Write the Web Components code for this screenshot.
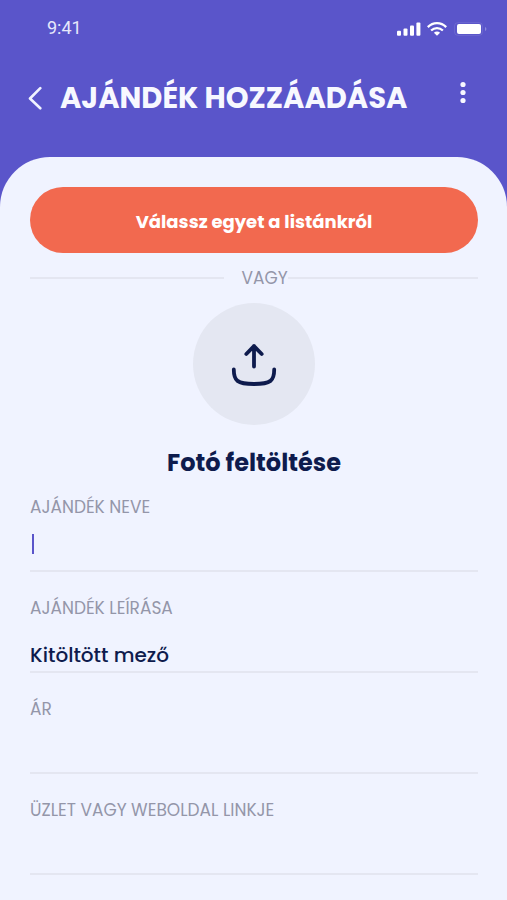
<!DOCTYPE html>
<html lang="hu">
<head>
<meta charset="utf-8">
<meta name="viewport" content="width=device-width, initial-scale=1">
<title>Ajándék hozzáadása</title>
<style>
  :root {
    --brand: #5a55ca;
    --surface: #f0f3ff;
    --accent: #f2694f;
    --ink: #0e1b4d;
    --muted: #9496a9;
    --line: #e4e6f1;
    --disc: #e4e7f2;
  }
  body {
    margin: 0;
    background: var(--surface);
    color: var(--ink);
    font-family: Poppins, "Open Sans", sans-serif;
  }
</style>
</head>
<body>
<gift-screen>
  <status-bar slot="top" time="9:41"></status-bar>
  <title-bar slot="top">AJÁNDÉK HOZZÁADÁSA</title-bar>
  <pill-button>Válassz egyet a listánkról</pill-button>
  <or-divider>VAGY</or-divider>
  <photo-upload>Fotó feltöltése</photo-upload>
  <form-field label="AJÁNDÉK NEVE" active></form-field>
  <form-field label="AJÁNDÉK LEÍRÁSA" value="Kitöltött mező"></form-field>
  <form-field label="ÁR"></form-field>
  <form-field label="ÜZLET VAGY WEBOLDAL LINKJE"></form-field>
</gift-screen>

<script>
const define = (name, html, setup) => {
  const template = document.createElement('template');
  template.innerHTML = html;
  customElements.define(name, class extends HTMLElement {
    connectedCallback() {
      if (this.shadowRoot) return;
      const root = this.attachShadow({ mode: 'open' });
      root.append(template.content.cloneNode(true));
      if (setup) setup(this, root);
    }
  });
};

define('gift-screen', `
  <style>
    :host { display: block; min-height: 100vh; background: var(--brand); }
    .page { display: flex; flex-direction: column; min-height: 100vh; }
    main {
      flex: 1;
      padding: 30px 29px 24px 30px;
      background: var(--surface);
      border-radius: 50px 50px 0 0;
    }
  </style>
  <div class="page">
    <header><slot name="top"></slot></header>
    <main><slot></slot></main>
  </div>`);

define('status-bar', `
  <style>
    :host {
      display: flex; align-items: center; justify-content: space-between;
      height: 56px; padding: 0 20px 0 47px; color: #e6e8fb;
      font: 400 18px/24px Roboto, sans-serif;
    }
    .icons { display: flex; align-items: center; gap: 6px; padding-top: 2px; }
    svg { display: block; }
  </style>
  <span class="time"></span>
  <div class="icons">
    <svg width="24" height="14" viewBox="0 0 24 14" fill="#fff" aria-hidden="true">
      <rect x="0" y="8.7" width="4" height="5" rx="1"/><rect x="6.5" y="6.5" width="4" height="7.2" rx="1"/>
      <rect x="13" y="3.5" width="4" height="10.2" rx="1"/><rect x="19.4" y="0.6" width="4" height="13.1" rx="1"/>
    </svg>
    <svg width="20" height="14" viewBox="0 0 20 14" fill="none" stroke="#fff" stroke-width="2.3" aria-hidden="true">
      <path d="M.8 5.1C6-.1 14-.1 19.2 5.1"/><path d="M4.1 8.5c3.4-3.3 8.4-3.3 11.8 0"/>
      <path d="M6.9 10.8c1.8-1.6 4.4-1.6 6.2 0L10 13.8z" fill="#fff" stroke="none"/>
    </svg>
    <svg width="34" height="14" viewBox="0 0 34 14" aria-hidden="true">
      <rect x="1.5" y=".6" width="28" height="12.8" rx="3.4" fill="none" stroke="#fff" stroke-opacity=".1"/>
      <rect x="4" y="2" width="24" height="10" rx="2" fill="#fff"/>
      <path d="M32 5v4c1.9-.8 1.9-3.2 0-4z" fill="#fff" fill-opacity=".3"/>
    </svg>
  </div>`,
  (host, root) => { root.querySelector('.time').textContent = host.getAttribute('time'); });

define('title-bar', `
  <style>
    :host { display: flex; align-items: center; height: 84px; padding: 0 32px 17px 24px; }
    h1 { flex: 1; margin: 0; color: #f7f8ff; font-size: 29px; line-height: 40px; font-weight: 700; white-space: nowrap; }
    button { display: block; padding: 0; border: 0; background: none; cursor: pointer; }
    svg { display: block; }
    .back { margin-right: 12px; }
    .more { align-self: flex-start; margin-top: 24px; }
  </style>
  <button class="back" type="button" aria-label="Vissza">
    <svg width="24" height="24" viewBox="0 0 24 24" fill="none" stroke="#f0f3ff" stroke-width="2.6" stroke-linecap="round" stroke-linejoin="round"><path d="M16.3 2.2 6 12.5l10.300 9.8"/></svg>
  </button>
  <h1><slot></slot></h1>
  <button class="more" type="button" aria-label="Továbbiak">
    <svg width="24" height="24" viewBox="0 0 24 24" fill="#f7f8ff"><circle cx="12" cy="4.5" r="2.6"/><circle cx="12" cy="12.5" r="2.6"/><circle cx="12" cy="20.5" r="2.6"/></svg>
  </button>`);

define('pill-button', `
  <style>
    :host { display: block; }
    button {
      display: block; width: 100%; height: 66px; padding: 4px 0 0; border: 0; border-radius: 33px;
      background: var(--accent); color: #fff; cursor: pointer;
      font: 700 18px/28px Poppins, "Open Sans", sans-serif;
    }
  </style>
  <button type="button"><slot></slot></button>`);

define('or-divider', `
  <style>
    :host {
      display: flex; align-items: center; height: 50px;
      color: var(--muted); font-size: 17px; line-height: 24px;
    }
    :host::before, :host::after { content: ""; flex: 1; height: 2px; background: var(--line); }
    :host::before { flex-basis: 4px; margin-right: 17px; }
  </style>
  <slot></slot>`);

define('photo-upload', `
  <style>
    :host { display: block; }
    button {
      display: flex; flex-direction: column; align-items: center; gap: 20px;
      margin: 0 auto; padding: 0; border: 0; background: none; color: var(--ink); cursor: pointer;
      font: 700 24px/36px Poppins, "Open Sans", sans-serif;
    }
    .disc { display: grid; place-items: center; width: 122px; height: 122px; border-radius: 50%; background: var(--disc); }
    svg { display: block; }
  </style>
  <button type="button">
    <span class="disc">
      <svg width="48" height="44" viewBox="0 0 48 44" fill="none" stroke="#0e1b4d" stroke-width="3.8" stroke-linecap="round" stroke-linejoin="round" aria-hidden="true">
        <path d="M24 24.5V4M16.3 12 24 4.2l7.7 7.8"/>
        <path d="M3.8 27.5C3.8 38.5 7 42 24 42S44.2 38.5 44.2 27.5"/>
      </svg>
    </span>
    <span><slot></slot></span>
  </button>`);

define('form-field', `
  <style>
    :host { display: block; padding-bottom: 25px; }
    :host([active]) { padding-top: 15px; }
    label { display: block; color: var(--muted); font-size: 17px; line-height: 22px; }
    input {
      display: block; box-sizing: border-box; width: 100%; height: 54px; padding: 0;
      border: 0; border-bottom: 2px solid var(--line); border-radius: 0; outline: 0;
      background: none; color: var(--ink);
      font: 500 20px/30px Poppins, "Open Sans", sans-serif;
    }
    :host([value]) input { padding-top: 20px; }
    :host([active]) input { background: linear-gradient(#5a55ca, #5a55ca) 2px center / 2px 20px no-repeat; }
  </style>
  <label for="control"></label>
  <input id="control" type="text">`,
  (host, root) => {
    root.querySelector('label').textContent = host.getAttribute('label');
    root.querySelector('input').value = host.getAttribute('value') || '';
  });
</script>
</body>
</html>
